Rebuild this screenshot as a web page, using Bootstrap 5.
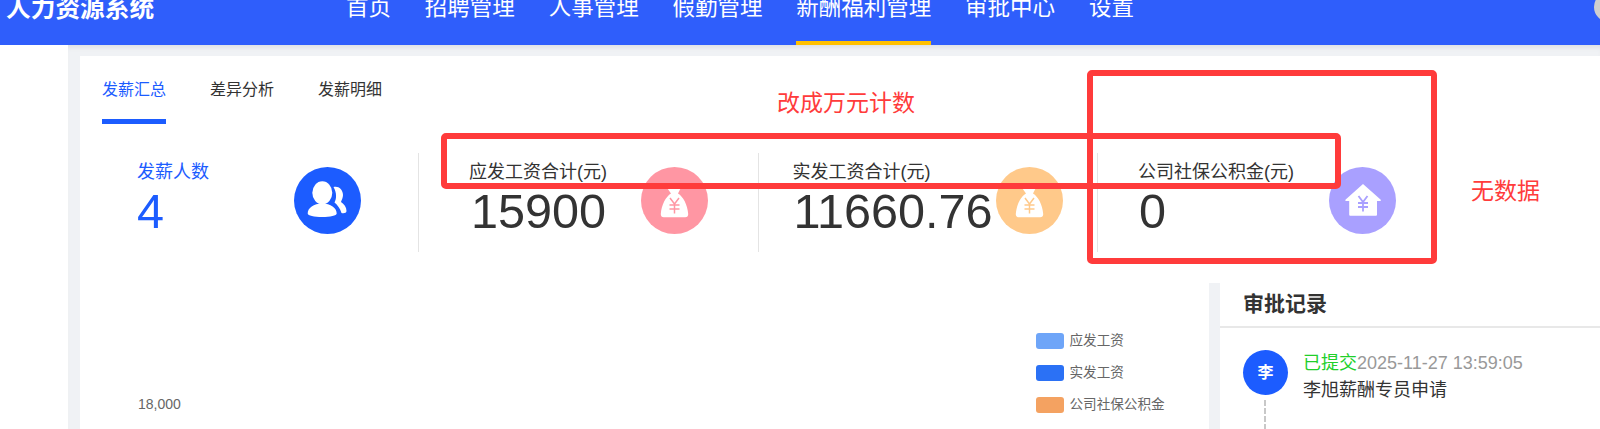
<!DOCTYPE html>
<html lang="zh-CN">
<head>
    <meta charset="UTF-8">
    <meta name="viewport" content="width=device-width, initial-scale=1.0">
    <title>人力资源系统</title>
    <link rel="stylesheet" href="https://cdn.jsdelivr.net/npm/bootstrap@5.3.0/dist/css/bootstrap.min.css">
    <style>
        html, body {
            height: 429px;
            overflow: hidden;
        }
        body {
            font-family: "Liberation Sans", "Noto Sans CJK SC", sans-serif;
            color: #333;
            background: #fff;
            position: relative;
        }
        .hr-top {
            height: 77px;
            margin-top: -32px;
            padding-left: 6px;
            background: #2f5efb;
            color: #fff;
            position: relative;
            z-index: 2;
        }
        .hr-brand {
            font-size: 24.7px;
            font-weight: 700;
            width: 148px;
            height: 77px;
            white-space: nowrap;
            line-height: 81px;
        }
        .hr-menu {
            margin-left: 192px;
            gap: 33.8px;
            height: 77px;
        }
        .hr-menu a {
            display: block;
            height: 77px;
            line-height: 79px;
            font-size: 22.5px;
            color: #fff;
            text-decoration: none;
            white-space: nowrap;
        }
        .hr-menu a.on {
            box-shadow: inset 0 -4px 0 #ffc000;
        }
        .hr-face {
            width: 30px;
            height: 30px;
            border-radius: 50%;
            background: #cfcfcf;
            margin-right: -24px;
        }
        .hr-page {
            height: 384px;
        }
        .hr-side {
            width: 68px;
            flex: none;
        }
        .hr-wrap {
            background: #f0f2f5;
            padding: 11px 0 0 12px;
            flex: 1;
            box-shadow: inset 0 5px 5px -3px #dcdee2;
        }
        .hr-panel {
            background: #fff;
            height: 100%;
        }
        .hr-tabs {
            padding-left: 22px;
            gap: 44px;
        }
        .hr-tabs a {
            display: block;
            height: 68px;
            padding-top: 22px;
            font-size: 16px;
            line-height: 24px;
            color: #333;
            text-decoration: none;
        }
        .hr-tabs a.on {
            color: #1c5cff;
            box-shadow: inset 0 -5px 0 #1c5cff;
        }
        .hr-stats {
            margin-top: 29px;
            height: 99px;
        }
        .hr-stat {
            height: 99px;
            padding-top: 7px;
            flex: none;
        }
        .hr-stat + .hr-stat {
            border-left: 1px solid #e4e4e4;
        }
        .hr-s1 { width: 338px; padding-left: 57px; }
        .hr-s2 { width: 339.5px; padding-left: 50px; }
        .hr-s3 { width: 339.5px; padding-left: 34px; }
        .hr-s4 { width: 300px; padding-left: 40px; }
        .hr-s1 .hr-txt { width: 157px; }
        .hr-s2 .hr-txt { width: 172px; }
        .hr-s3 .hr-txt { width: 203px; }
        .hr-s4 .hr-txt { width: 191px; }
        .hr-txt { flex: none; }
        .hr-label {
            font-size: 18px;
            line-height: 24px;
            white-space: nowrap;
        }
        .hr-num {
            font-size: 48.6px;
            line-height: 50px;
            margin-top: 2px;
            white-space: nowrap;
        }
        .hr-blue { color: #1c5cff; }
        .hr-s2 .hr-num { padding-left: 2px; }
        .hr-s3 .hr-num { padding-left: 1px; }
        .hr-s4 .hr-num { padding-left: 1px; }
        .hr-ico {
            width: 67px;
            height: 67px;
            margin-top: 7px;
            flex: none;
            display: block;
        }
        .hr-lower {
            margin-top: 31px;
            height: 146px;
        }
        .hr-chart {
            width: 1129px;
            flex: none;
        }
        .hr-axis {
            padding-left: 58px;
            padding-top: 111px;
            font-size: 14px;
            line-height: 20px;
            color: #666;
        }
        .hr-legend {
            width: 173.5px;
            padding-top: 50px;
            font-size: 13.6px;
            color: #666;
            gap: 16px;
        }
        .hr-swatch {
            width: 28px;
            height: 16px;
            border-radius: 3px;
            margin-right: 6px;
            flex: none;
        }
        .hr-swatch-a { background: #6ea5f8; }
        .hr-swatch-b { background: #2b71f5; }
        .hr-swatch-c { background: #f4a261; }
        .hr-row {
            height: 16px;
            line-height: 16px;
            white-space: nowrap;
        }
        .hr-record {
            flex: 1;
            border-left: 11px solid #f0f2f5;
        }
        .hr-record-title {
            height: 45px;
            border-bottom: 2px solid #e8e8e8;
            padding-left: 23px;
            font-size: 21px;
            font-weight: 700;
            line-height: 41px;
        }
        .hr-item {
            padding: 22px 0 0 23px;
            gap: 15px;
        }
        .hr-avatar {
            width: 45px;
            height: 45px;
            border-radius: 50%;
            background: #1c5cff;
            color: #fff;
            font-size: 16px;
            font-weight: 700;
            flex: none;
        }
        .hr-dash {
            width: 2px;
            height: 30px;
            margin: 5px 0 0 21px;
            border-left: 2px dashed #c8c8c8;
        }
        .hr-line1 {
            font-size: 18px;
            line-height: 26px;
            color: #999;
            white-space: nowrap;
        }
        .hr-green { color: #21cf2a; }
        .hr-line2 {
            font-size: 18px;
            line-height: 26px;
            margin-top: 1px;
            white-space: nowrap;
        }
        .hr-mark {
            position: absolute;
            border: 6px solid #ff3b3b;
            border-radius: 5px;
            z-index: 3;
        }
        .hr-mark-a { left: 441px; top: 133px; width: 900px; height: 56px; }
        .hr-mark-b { left: 1087px; top: 70px; width: 350px; height: 194px; }
        .hr-note {
            position: absolute;
            color: #ff3b3b;
            font-size: 23px;
            line-height: 30px;
            white-space: nowrap;
            z-index: 3;
        }
        .hr-note-a { left: 777px; top: 88px; }
        .hr-note-b { left: 1471px; top: 176px; }
    </style>
</head>
<body>
    <header class="hr-top d-flex align-items-center">
        <div class="hr-brand">人力资源系统</div>
        <ul class="nav hr-menu flex-nowrap">
            <li><a href="#">首页</a></li>
            <li><a href="#">招聘管理</a></li>
            <li><a href="#">人事管理</a></li>
            <li><a href="#">假勤管理</a></li>
            <li><a href="#" class="on">新酬福利管理</a></li>
            <li><a href="#">审批中心</a></li>
            <li><a href="#">设置</a></li>
        </ul>
        <div class="hr-face ms-auto"></div>
    </header>

    <div class="hr-page d-flex">
        <div class="hr-side"></div>
        <div class="hr-wrap">
            <div class="hr-panel">
                <ul class="nav hr-tabs">
                    <li><a href="#" class="on">发薪汇总</a></li>
                    <li><a href="#">差异分析</a></li>
                    <li><a href="#">发薪明细</a></li>
                </ul>

                <div class="hr-stats d-flex">
                    <div class="hr-stat hr-s1 d-flex">
                        <div class="hr-txt">
                            <div class="hr-label hr-blue">发薪人数</div>
                            <div class="hr-num hr-blue">4</div>
                        </div>
                        <svg class="hr-ico" viewBox="0 0 67 67">
                            <circle cx="33.5" cy="33.5" r="33.5" fill="#1c5cff"/>
                            <path d="M39.5 20C44 18.500 49 22 49 28C49 31 47.500 33 47 35C50 37 52.500 40 52.500 44C52.500 46 50 46.500 47.500 46C46 41 43 37.500 40.500 35.500C42.500 32 43 26 39.500 20z" fill="#fff"/>
                            <ellipse cx="28.300" cy="25.800" rx="10" ry="11.500" fill="#fff"/>
                            <path d="M13.700 46.500c0-5.500 6-10 14.500-10s14.500 4.500 14.500 10c0 2.200-6.500 3.500-14.500 3.500s-14.500-1.300-14.500-3.500z" fill="#fff"/>
                        </svg>
                    </div>
                    <div class="hr-stat hr-s2 d-flex">
                        <div class="hr-txt">
                            <div class="hr-label">应发工资合计(元)</div>
                            <div class="hr-num">15900</div>
                        </div>
                        <svg class="hr-ico" viewBox="0 0 67 67">
                            <circle cx="33.5" cy="33.5" r="33.5" fill="#ff96a3"/>
                            <path d="M26.500 21.500h13l-2.500 5c5 3 9.500 11 10.200 20.500.1 2-1 3.300-3 3.300h-21.400c-2 0-3.100-1.300-3-3.300.7-9.500 5.200-17.500 10.200-20.500z" fill="#fff"/>
                            <path d="M29 31l4.500 6 4.500-6M28.500 38h10M28.500 42h10M33.500 37v9.500" fill="none" stroke="#ff96a3" stroke-width="1.500"/>
                        </svg>
                    </div>
                    <div class="hr-stat hr-s3 d-flex">
                        <div class="hr-txt">
                            <div class="hr-label">实发工资合计(元)</div>
                            <div class="hr-num">11660.76</div>
                        </div>
                        <svg class="hr-ico" viewBox="0 0 67 67">
                            <circle cx="33.5" cy="33.5" r="33.5" fill="#ffc98a"/>
                            <path d="M26.500 21.500h13l-2.500 5c5 3 9.500 11 10.200 20.500.1 2-1 3.300-3 3.300h-21.400c-2 0-3.100-1.300-3-3.300.7-9.500 5.200-17.500 10.200-20.500z" fill="#fff"/>
                            <path d="M29 31l4.500 6 4.500-6M28.500 38h10M28.500 42h10M33.500 37v9.500" fill="none" stroke="#ffc98a" stroke-width="1.500"/>
                        </svg>
                    </div>
                    <div class="hr-stat hr-s4 d-flex">
                        <div class="hr-txt">
                            <div class="hr-label">公司社保公积金(元)</div>
                            <div class="hr-num">0</div>
                        </div>
                        <svg class="hr-ico" viewBox="0 0 67 67">
                            <circle cx="33.5" cy="33.5" r="33.5" fill="#a9a0ff"/>
                            <path d="M34 17L51.500 32.500c.8.800.3 1.500-.6 1.500H48V47.500c0 .8-.5 1.300-1.300 1.300H21.500c-.8 0-1.300-.5-1.300-1.300V34h-2.900c-.9 0-1.400-.7-.6-1.500z" fill="#fff"/>
                            <path d="M29.500 29l4.500 6 4.500-6M29 36h10M29 40h10M34 35v9.500" fill="none" stroke="#a9a0ff" stroke-width="1.800"/>
                        </svg>
                    </div>
                </div>

                <div class="hr-lower d-flex">
                    <div class="hr-chart d-flex justify-content-between">
                        <div class="hr-axis">18,000</div>
                        <div class="hr-legend d-flex flex-column">
                            <div class="hr-row d-flex"><span class="hr-swatch hr-swatch-a"></span>应发工资</div>
                            <div class="hr-row d-flex"><span class="hr-swatch hr-swatch-b"></span>实发工资</div>
                            <div class="hr-row d-flex"><span class="hr-swatch hr-swatch-c"></span>公司社保公积金</div>
                        </div>
                    </div>
                    <div class="hr-record">
                        <div class="hr-record-title">审批记录</div>
                        <div class="hr-item d-flex">
                            <div>
                                <div class="hr-avatar d-flex align-items-center justify-content-center">李</div>
                                <div class="hr-dash"></div>
                            </div>
                            <div>
                                <div class="hr-line1"><span class="hr-green">已提交</span>2025-11-27 13:59:05</div>
                                <div class="hr-line2">李旭薪酬专员申请</div>
                            </div>
                        </div>
                    </div>
                </div>
            </div>
        </div>
    </div>

    <div class="hr-mark hr-mark-a"></div>
    <div class="hr-mark hr-mark-b"></div>
    <div class="hr-note hr-note-a">改成万元计数</div>
    <div class="hr-note hr-note-b">无数据</div>

    <script src="https://cdn.jsdelivr.net/npm/bootstrap@5.3.0/dist/js/bootstrap.bundle.min.js"></script>
</body>
</html>
